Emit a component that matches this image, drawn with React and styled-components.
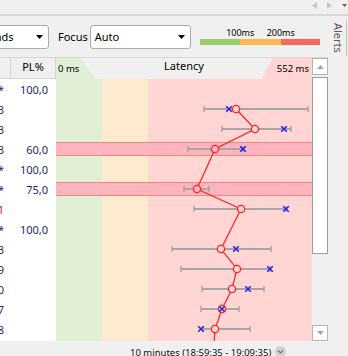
import styled, { createGlobalStyle } from "styled-components";

const GREEN = "#e0efd6";
const ORANGE = "#feebcf";
const RED = "#ffd6d3";

const GlobalStyle = createGlobalStyle`
  html, body {
    margin: 0;
    padding: 0;
  }
  body {
    width: 348px;
    height: 356px;
    overflow: hidden;
    background: #f0f0f0;
    font-family: "Noto Sans", "Segoe UI", sans-serif;
    font-size: 11px;
    color: #000;
  }
`;

const Page = styled.div`
  width: 348px;
  height: 356px;
  display: flex;
  flex-direction: column;
  overflow: hidden;
`;

const TopStrip = styled.div`
  height: 10px;
  padding: 0 1px 4px 0;
  border-bottom: 2px solid #d9d9d9;
  display: flex;
  align-items: center;
  justify-content: flex-end;
  gap: 10px;
`;

const Main = styled.div`
  flex: 1;
  display: flex;
  min-height: 0;
`;

const Content = styled.div`
  width: 328px;
  display: flex;
  flex-direction: column;
`;

const Toolbar = styled.div`
  height: 41px;
  display: flex;
  align-items: center;
`;

const Select = styled.div`
  display: flex;
  align-items: center;
  justify-content: space-between;
  box-sizing: border-box;
  flex-shrink: 0;
  width: ${(p) => p.$width}px;
  height: 24px;
  margin-left: ${(p) => p.$offset || 0}px;
  padding: 0 5px 0 4px;
  background: #fff;
  border: 1px solid #acacac;
  border-radius: 3px;
  white-space: nowrap;
`;

const FocusLabel = styled.span`
  margin: 0 2px 0 9px;
`;

const Scale = styled.div`
  width: 120px;
  margin: -2px 0 0 9px;
  display: flex;
  flex-direction: column;
`;

const ScaleLabels = styled.div`
  display: flex;
  padding-left: 20px;
  font-size: 9px;
  line-height: 11px;
`;

const ScaleLabel = styled.span`
  width: ${(p) => p.$width}px;
  text-align: center;
`;

const ScaleBar = styled.div`
  display: grid;
  grid-template-columns: 40px 41px 39px;
  height: 6px;
  margin-top: 1px;
`;

const ScaleSegment = styled.div`
  background: ${(p) => p.$color};
`;

const Table = styled.div`
  display: flex;
  border-top: 1px solid #d5d5d5;
  height: 283px;
`;

const Grid = styled.div`
  width: 312px;
  display: flex;
  flex-direction: column;
`;

const HeadRow = styled.div`
  display: flex;
  height: 21px;
`;

const HeadCell = styled.div`
  box-sizing: border-box;
  width: ${(p) => p.$width}px;
  border-right: 1px solid #d5d5d5;
  border-bottom: 1px solid #d5d5d5;
  display: flex;
  align-items: center;
  justify-content: center;
  padding-bottom: 3px;
`;

const ChartHead = styled.div`
  width: 256px;
  height: 21px;
  display: grid;
  grid-template-columns: 1fr auto 1fr;
  align-items: end;
  background:
    linear-gradient(${GREEN}, ${GREEN}) 0 0 / 25px 100% no-repeat,
    linear-gradient(to top right, ${GREEN} 50%, transparent 50%) 25px 0 / 14px 100% no-repeat,
    linear-gradient(to bottom right, transparent 50%, ${RED} 50%) 205px 0 / 12px 100% no-repeat,
    linear-gradient(${RED}, ${RED}) right 0 / 39px 100% no-repeat,
    #f0f0f0;
`;

const RangeText = styled.span`
  font-size: 9.5px;
  line-height: 14px;
  padding: 0 3px 3px 2px;
  justify-self: ${(p) => (p.$end ? "end" : "start")};
`;

const HeadTitle = styled.span`
  line-height: 14px;
  margin-bottom: 6px;
`;

const Body = styled.div`
  display: flex;
  height: 262px;
  overflow: hidden;
`;

const LeftCols = styled.div`
  width: 56px;
  background: #fff;
`;

const Row = styled.div`
  display: grid;
  grid-template-columns: 11px 45px;
  height: 20px;
  align-items: center;
  color: #1f2a6e;
`;

const HostCell = styled.div`
  display: flex;
  justify-content: flex-end;
  overflow: hidden;
  white-space: nowrap;
  padding-right: 7px;
  color: ${(p) => (p.$alert ? "#a3332b" : "inherit")};
`;

const LossCell = styled.div`
  text-align: right;
  padding-right: 8px;
`;

const ChartSvg = styled.svg`
  display: block;
  flex-shrink: 0;
`;

const Scrollbar = styled.div`
  width: 16px;
  display: flex;
  flex-direction: column;
  background: #f0f0f0;
`;

const ScrollButton = styled.div`
  box-sizing: border-box;
  height: ${(p) => p.$height}px;
  background: #fff;
  border: 1px solid #b4b4b4;
  display: flex;
  align-items: center;
  justify-content: center;
`;

const Thumb = styled.div`
  box-sizing: border-box;
  height: 177px;
  margin-top: 2px;
  background: #fff;
  border: 1px solid #9c9c9c;
`;

const Track = styled.div`
  flex: 1;
`;

const Status = styled.div`
  height: 15px;
  box-sizing: border-box;
  padding: 5px 0 0 130px;
  display: flex;
  align-items: flex-start;
  gap: 4px;
  font-size: 9.5px;
  line-height: 14px;
  overflow: hidden;
  color: #111;
`;

const Side = styled.div`
  width: 20px;
`;

const AlertsTab = styled.div`
  width: 16px;
  height: 36px;
  margin: 4px 0 0 2px;
  border-right: 1px solid #c4c4c4;
  writing-mode: vertical-rl;
  display: flex;
  align-items: center;
  justify-content: center;
  color: #5a5656;
`;

const rows = [
  { host: "*", pl: "100,0" },
  { host: "192.168.0.3", pl: "", d: { y: 30, a: 148, b: 252, c: 180, x: 173 } },
  { host: "10.12.40.3", pl: "", d: { y: 50, a: 166, b: 235, c: 199, x: 228 } },
  { host: "62.115.9.3", pl: "60,0", hl: true, d: { y: 70, a: 132, b: 187, c: 159, x: 187 } },
  { host: "*", pl: "100,0" },
  { host: "*", pl: "75,0", hl: true, d: { y: 110, a: 128, b: 153, c: 141 } },
  { host: "81.93.211.1", pl: "", alert: true, d: { y: 130, a: 138, b: 230, c: 185, x: 230 } },
  { host: "*", pl: "100,0" },
  { host: "80.239.1.3", pl: "", d: { y: 170, a: 116, b: 215, c: 165, x: 180 } },
  { host: "213.155.9.9", pl: "", d: { y: 190, a: 125, b: 214, c: 181, x: 214 } },
  { host: "87.245.6.0", pl: "", d: { y: 210, a: 146, b: 208, c: 176, x: 192 } },
  { host: "95.167.2.7", pl: "", d: { y: 230, a: 145, b: 183, c: 166, x: 166 } },
  { host: "77.88.55.8", pl: "", d: { y: 250, a: 147, b: 194, c: 159, x: 145 } },
  { host: "", pl: "" },
];

const points = rows.filter((r) => r.d).map((r) => `${r.d.c},${r.d.y}`);
points.push("158,266");

function Triangle({ dir = "down", color = "#000", w = 7, h = 4 }) {
  const shapes = {
    down: `0,0 ${w},0 ${w / 2},${h}`,
    up: `0,${h} ${w},${h} ${w / 2},0`,
    left: `${w},0 ${w},${h} 0,${h / 2}`,
    right: `0,0 0,${h} ${w},${h / 2}`,
  };
  return (
    <svg width={w} height={h} viewBox={`0 0 ${w} ${h}`}>
      <polygon points={shapes[dir]} fill={color} />
    </svg>
  );
}

function Chart() {
  return (
    <ChartSvg width="256" height="262" viewBox="0 0 256 262">
      <rect x="0" y="0" width="46" height="262" fill={GREEN} />
      <rect x="46" y="0" width="46" height="262" fill={ORANGE} />
      <rect x="92" y="0" width="164" height="262" fill={RED} />
      {rows.map((r, i) =>
        r.hl ? (
          <rect key={i} x="-1" y={i * 20 + 3.5} width="258" height="13" fill="#ffb5bf" stroke="#ee8a7a" />
        ) : null
      )}
      {rows.map((r, i) =>
        r.d ? (
          <g key={i} stroke="#aaa4a4">
            <line x1={r.d.a} y1={r.d.y} x2={r.d.b} y2={r.d.y} strokeWidth="2" />
            <line x1={r.d.a} y1={r.d.y - 3} x2={r.d.a} y2={r.d.y + 3} strokeWidth="1.5" />
            <line x1={r.d.b} y1={r.d.y - 3} x2={r.d.b} y2={r.d.y + 3} strokeWidth="1.5" />
          </g>
        ) : null
      )}
      <polyline points={points.join(" ")} fill="none" stroke="#ff2424" strokeWidth="1.2" />
      {rows.map((r, i) =>
        r.d ? (
          <circle key={i} cx={r.d.c} cy={r.d.y} r="3.6" fill={r.hl ? "#ffb5bf" : RED} stroke="#ff2424" strokeWidth="1.3" />
        ) : null
      )}
      {rows.map((r, i) =>
        r.d && r.d.x ? (
          <g key={i} stroke="#2323ee" strokeWidth="1.6">
            <line x1={r.d.x - 2.8} y1={r.d.y - 2.8} x2={r.d.x + 2.8} y2={r.d.y + 2.8} />
            <line x1={r.d.x - 2.8} y1={r.d.y + 2.8} x2={r.d.x + 2.8} y2={r.d.y - 2.8} />
          </g>
        ) : null
      )}
    </ChartSvg>
  );
}

export default function App() {
  return (
    <Page>
      <GlobalStyle />
      <TopStrip>
        <Triangle dir="left" color="#c4c4c4" w={5} h={7} />
        <Triangle dir="right" color="#c4c4c4" w={5} h={7} />
        <Triangle dir="down" color="#606060" w={5} h={3} />
      </TopStrip>
      <Main>
        <Content>
          <Toolbar>
            <Select $width={101} $offset={-52}>
              <span>2.5 seconds</span>
              <Triangle />
            </Select>
            <FocusLabel>Focus</FocusLabel>
            <Select $width={101}>
              <span>Auto</span>
              <Triangle />
            </Select>
            <Scale>
              <ScaleLabels>
                <ScaleLabel $width={41}>100ms</ScaleLabel>
                <ScaleLabel $width={40}>200ms</ScaleLabel>
              </ScaleLabels>
              <ScaleBar>
                <ScaleSegment $color="#9bcb6d" />
                <ScaleSegment $color="#fcb955" />
                <ScaleSegment $color="#f46a56" />
              </ScaleBar>
            </Scale>
          </Toolbar>
          <Table>
            <Grid>
              <HeadRow>
                <HeadCell $width={11} />
                <HeadCell $width={45}>PL%</HeadCell>
                <ChartHead>
                  <RangeText>0 ms</RangeText>
                  <HeadTitle>Latency</HeadTitle>
                  <RangeText $end>552 ms</RangeText>
                </ChartHead>
              </HeadRow>
              <Body>
                <LeftCols>
                  {rows.map((r, i) => (
                    <Row key={i}>
                      <HostCell $alert={r.alert}>{r.host}</HostCell>
                      <LossCell>{r.pl}</LossCell>
                    </Row>
                  ))}
                </LeftCols>
                <Chart />
              </Body>
            </Grid>
            <Scrollbar>
              <ScrollButton $height={17}>
                <Triangle dir="up" color="#a6a6a6" />
              </ScrollButton>
              <Thumb />
              <Track />
              <ScrollButton $height={16}>
                <Triangle color="#a6a6a6" />
              </ScrollButton>
            </Scrollbar>
          </Table>
          <Status>
            <span>10 minutes (18:59:35 - 19:09:35)</span>
            <svg width="11" height="11" viewBox="0 0 11 11">
              <circle cx="5.5" cy="5.5" r="5.5" fill="#d2d2d2" />
              <polyline points="3,4.5 5.5,7 8,4.5" fill="none" stroke="#777" strokeWidth="1.2" />
            </svg>
          </Status>
        </Content>
        <Side>
          <AlertsTab>Alerts</AlertsTab>
        </Side>
      </Main>
    </Page>
  );
}
